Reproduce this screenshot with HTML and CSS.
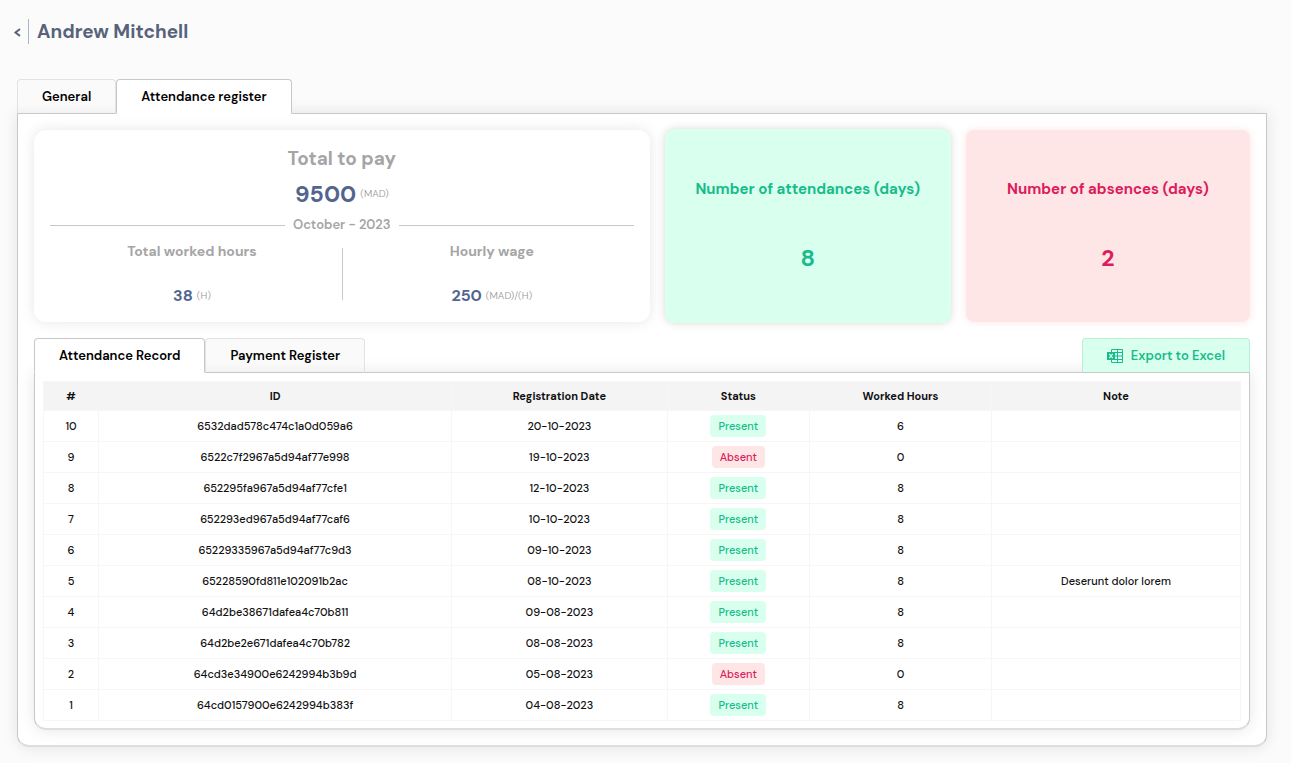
FILE: index.html
```html
<!DOCTYPE html>
<html lang="en">
<head>
<meta charset="utf-8">
<title>Andrew Mitchell</title>
<meta name="viewport" content="width=device-width, initial-scale=1">
<link rel="stylesheet" href="styles.css">
</head>
<body>
<header class="page-header">
  <button class="back" aria-label="Back"><svg width="8" height="10" viewBox="0 0 8 10" aria-hidden="true"><path d="M7 1 2.500 4.500 7 8" fill="none" stroke="currentColor" stroke-width="2"/></svg></button>
  <h1 class="page-title">Andrew Mitchell</h1>
</header>
<main class="content">
  <div class="tabs" role="tablist">
    <button class="tab" role="tab" aria-selected="false">General</button>
    <button class="tab tab-active" role="tab" aria-selected="true">Attendance register</button>
  </div>
  <section class="panel panel-outer">
    <div class="summary">
      <article class="card pay-card">
        <h2 class="pay-title">Total to pay</h2>
        <p class="pay-total">9500 <small class="unit">(MAD)</small></p>
        <div class="period">October - 2023</div>
        <div class="pay-details">
          <div class="detail">
            <h3 class="detail-label">Total worked hours</h3>
            <p class="detail-value">38 <small class="unit">(H)</small></p>
          </div>
          <div class="detail">
            <h3 class="detail-label">Hourly wage</h3>
            <p class="detail-value">250 <small class="unit">(MAD)/(H)</small></p>
          </div>
        </div>
      </article>
      <article class="card count-card count-present">
        <h2 class="count-label">Number of attendances (days)</h2>
        <p class="count-value">8</p>
      </article>
      <article class="card count-card count-absent">
        <h2 class="count-label">Number of absences (days)</h2>
        <p class="count-value">2</p>
      </article>
    </div>
    <div class="tabs" role="tablist">
      <button class="tab tab-active" role="tab" aria-selected="true">Attendance Record</button>
      <button class="tab" role="tab" aria-selected="false">Payment Register</button>
      <button class="tab export"><svg width="16" height="14" viewBox="0 0 16 14" aria-hidden="true"><path d="M4.5.5h11v13h-11zM4.500 3.500h11M4.500 7h11M4.500 10.500h11M10.500.5v13" fill="none" stroke="currentColor"/><path d="M0 3h8v8H0z" fill="currentColor"/><path d="m2.300 4.800 3.400 4.400m0-4.400L2.300 9.200" stroke="#d9ffee" stroke-width="1.200"/></svg>Export to Excel</button>
    </div>
    <section class="panel panel-inner">
      <table class="records">
        <colgroup><col class="c-num"><col class="c-id"><col class="c-date"><col class="c-status"><col class="c-hours"><col class="c-note"></colgroup>
        <thead><tr><th scope="col">#</th><th scope="col">ID</th><th scope="col">Registration Date</th><th scope="col">Status</th><th scope="col">Worked Hours</th><th scope="col">Note</th></tr></thead>
        <tbody>
          <tr><td>10</td><td>6532dad578c474c1a0d059a6</td><td>20-10-2023</td><td><span class="badge present">Present</span></td><td>6</td><td></td></tr>
          <tr><td>9</td><td>6522c7f2967a5d94af77e998</td><td>19-10-2023</td><td><span class="badge absent">Absent</span></td><td>0</td><td></td></tr>
          <tr><td>8</td><td>652295fa967a5d94af77cfe1</td><td>12-10-2023</td><td><span class="badge present">Present</span></td><td>8</td><td></td></tr>
          <tr><td>7</td><td>652293ed967a5d94af77caf6</td><td>10-10-2023</td><td><span class="badge present">Present</span></td><td>8</td><td></td></tr>
          <tr><td>6</td><td>65229335967a5d94af77c9d3</td><td>09-10-2023</td><td><span class="badge present">Present</span></td><td>8</td><td></td></tr>
          <tr><td>5</td><td>65228590fd811e102091b2ac</td><td>08-10-2023</td><td><span class="badge present">Present</span></td><td>8</td><td>Deserunt dolor lorem</td></tr>
          <tr><td>4</td><td>64d2be38671dafea4c70b811</td><td>09-08-2023</td><td><span class="badge present">Present</span></td><td>8</td><td></td></tr>
          <tr><td>3</td><td>64d2be2e671dafea4c70b782</td><td>08-08-2023</td><td><span class="badge present">Present</span></td><td>8</td><td></td></tr>
          <tr><td>2</td><td>64cd3e34900e6242994b3b9d</td><td>05-08-2023</td><td><span class="badge absent">Absent</span></td><td>0</td><td></td></tr>
          <tr><td>1</td><td>64cd0157900e6242994b383f</td><td>04-08-2023</td><td><span class="badge present">Present</span></td><td>8</td><td></td></tr>
        </tbody>
      </table>
    </section>
  </section>
</main>
</body>
</html>
```
FILE: styles.css
```css
* { box-sizing: border-box; }

body {
  margin: 0;
  background: #fbfbfb;
  color: #111;
  font-family: "DM Sans", Inter, "Open Sans", sans-serif;
  font-size: 11px;
  font-weight: 500;
}

h1, h2, h3, p { margin: 0; }
button { font: inherit; color: inherit; cursor: pointer; }

.page-header {
  display: flex;
  align-items: center;
  gap: 7px;
  padding: 19px 13px 0;
  color: #56637a;
}
.back {
  display: flex;
  align-items: center;
  padding: 3px 0 0;
  border: 0;
  background: none;
}
.page-title {
  padding-left: 8px;
  border-left: 1px solid #aab5cd;
  font-size: 19px;
  line-height: 25px;
  font-weight: 700;
}

.content { padding: 35px 24px 16px 17px; }

.tabs {
  display: flex;
  position: relative;
  z-index: 1;
  margin-bottom: -1px;
}
.tab {
  height: 35px;
  padding: 0 24px;
  border: 1px solid #e2e2e2;
  border-bottom-color: #c8c8c8;
  border-radius: 4px 4px 0 0;
  background: linear-gradient(#fafafa 75%, #f3f3f3);
  font-size: 13px;
  font-weight: 600;
  color: #000;
}
.tab-active {
  border-color: #c8c8c8;
  border-bottom-color: #fff;
  background: #fff;
}
.export {
  display: flex;
  align-items: center;
  gap: 8px;
  margin-left: auto;
  border-color: #b9efd6;
  border-bottom-color: #c8c8c8;
  background: #d9ffee;
  color: #18bc8c;
}

.panel {
  border: 1px solid #c8c8c8;
  border-bottom: 2px solid #dedede;
  border-radius: 0 0 12px 12px;
  background: #fff;
  box-shadow: 0 0 16px rgba(0, 0, 0, 0.1);
}
.panel-outer { padding: 16px 16px 15px; }
.panel-inner { padding: 8px 8px 7px; }

.summary {
  display: grid;
  grid-template-columns: 13fr 6fr 6fr;
  gap: 16px;
  margin-bottom: 16px;
}
.card {
  height: 192px;
  text-align: center;
}
.pay-card {
  padding: 17px 16px 16px;
  border-radius: 12px;
  box-shadow: 0 0 14px rgba(0, 0, 0, 0.1);
  color: #a5a5a5;
}
.pay-title {
  font-size: 19px;
  line-height: 24px;
  font-weight: 700;
}
.pay-total {
  display: flex;
  align-items: center;
  justify-content: center;
  gap: 4px;
  padding-top: 7px;
  font-size: 23px;
  line-height: 32px;
  font-weight: 700;
  color: #52658f;
}
.unit {
  font-size: 10px;
  font-weight: 300;
  color: #999;
}
.period {
  display: flex;
  align-items: center;
  gap: 8px;
  padding-top: 7px;
  font-size: 13px;
  line-height: 16px;
  font-weight: 600;
}
.period::before, .period::after {
  content: "";
  flex: 1;
  height: 1px;
  background: #c8c8c8;
}
.pay-details {
  display: grid;
  grid-template-columns: 1fr 1fr;
  padding-top: 8px;
}
.detail {
  position: relative;
  padding-right: 8px;
}
.detail + .detail {
  padding: 0 0 0 8px;
}
.detail + .detail::before {
  content: "";
  position: absolute;
  left: 0;
  top: 7px;
  height: 52px;
  border-left: 1px solid #c8c8c8;
}
.detail-label {
  font-size: 14px;
  line-height: 20px;
  font-weight: 700;
}
.detail-value {
  display: flex;
  align-items: center;
  justify-content: center;
  gap: 4px;
  padding-top: 25px;
  font-size: 16px;
  line-height: 20px;
  font-weight: 700;
  color: #52658f;
}

.count-card {
  padding-top: 47px;
  border-radius: 8px;
}
.count-present {
  background: #d9ffee;
  box-shadow: 0 0 0 1px #d9ffee, 0 0 8px rgba(80, 60, 30, 0.25);
  color: #18bc8c;
}
.count-absent {
  background: #ffe6e6;
  box-shadow: 0 0 8px #ffe6e6;
  color: #dc1c5c;
}
.count-label {
  font-size: 15px;
  line-height: 24px;
  font-weight: 700;
}
.count-value {
  padding-top: 41px;
  font-size: 23px;
  line-height: 32px;
  font-weight: 700;
}

.records {
  width: 100%;
  border-collapse: collapse;
  table-layout: fixed;
  text-align: center;
}
.records th, .records td {
  padding: 0;
  border: 1px solid #f6f6f6;
}
.records th {
  height: 29px;
  background: #f4f4f4;
  font-weight: 700;
}
.records td { height: 31px; }
.c-num { width: 4.6%; }
.c-id { width: 29.5%; }
.c-date { width: 18%; }
.c-status { width: 11.9%; }
.c-hours { width: 15.2%; }
.badge {
  display: inline-block;
  padding: 0 8px;
  border-radius: 4px;
  line-height: 22px;
}
.present { background: #d9ffee; color: #18bc8c; }
.absent { background: #ffe6e6; color: #dc1c5c; }
```
